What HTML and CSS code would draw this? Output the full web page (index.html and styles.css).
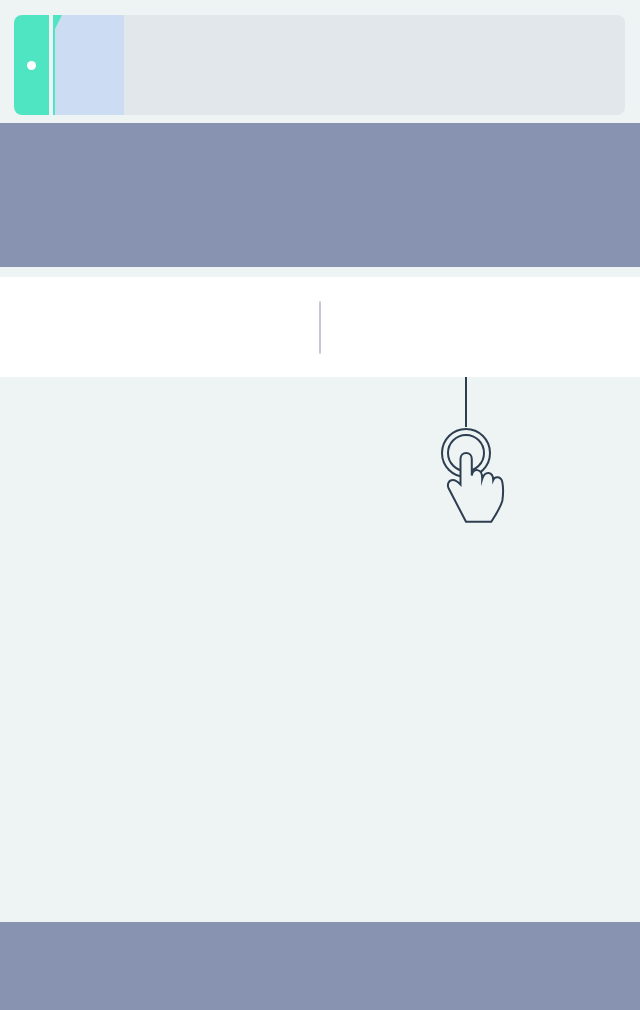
FILE: index.html
```
<!DOCTYPE html>
<html lang="en">
<head>
<meta charset="utf-8">
<meta name="viewport" content="width=device-width, initial-scale=1">
<title>Overview</title>
<link rel="stylesheet" href="styles.css">
</head>
<body>
<header class="top">
  <div class="card">
    <div class="card-handle"><span class="dot"></span></div>
    <div class="card-thumb">
      <svg class="fold" viewBox="0 0 9 14" aria-hidden="true"><path d="M0 0H9L2 14H0Z"/></svg>
    </div>
    <div class="card-body"></div>
  </div>
</header>
<section class="banner"></section>
<section class="split"><span class="divider"></span></section>
<main class="content">
  <svg class="tap" viewBox="0 0 68 148" aria-hidden="true">
    <path d="M26 0V50"/>
    <circle cx="26" cy="76" r="24"/>
    <circle cx="26" cy="76" r="18"/>
    <path class="hand" d="M20.500 107.500V82C20.500 74 31.800 74 31.800 82V98.500C33 91 42.500 90.500 42.200 102C44.800 93.500 53 94 53.200 103C55 99 61 99 62.300 105C63.500 111 63.200 118 62.300 124C60.500 130 57 136 51.300 144.800H26L8.500 111C7 107.500 8.500 103 13 103C16 103 18.500 105.500 20.500 107.500Z"/>
  </svg>
</main>
<footer class="footer"></footer>
</body>
</html>
```
FILE: styles.css
```
* {
  box-sizing: border-box;
}

body {
  margin: 0;
  min-height: 100vh;
  display: flex;
  flex-direction: column;
  background: #eef3f4;
  font-family: "Open Sans", sans-serif;
}

.top {
  padding: 15px 15px 8px 14px;
}

.card {
  display: flex;
  min-height: 100px;
  border-radius: 8px;
  overflow: hidden;
}

.card-handle {
  display: flex;
  align-items: center;
  justify-content: center;
  width: 35px;
  margin-right: 4px;
  background: #50e5c2;
}

.dot {
  width: 9px;
  height: 9px;
  border-radius: 50%;
  background: #fff;
}

.card-thumb {
  display: flex;
  align-items: flex-start;
  width: 71px;
  background: linear-gradient(to right, #50e5c2 2px, #ccdcf2 2px);
}

.fold {
  width: 9px;
  height: 14px;
  fill: #50e5c2;
}

.card-body {
  flex: 1;
  background: #e1e7eb;
}

.banner {
  min-height: 144px;
  background: #8893b1;
}

.split {
  display: flex;
  justify-content: center;
  margin-top: 10px;
  padding: 24px 0 23px;
  background: #fff;
}

.divider {
  width: 2px;
  height: 53px;
  border: solid #dadeea;
  border-width: 1px 0;
  background: #c3c9da;
}

.content {
  flex: 1;
  padding-left: 440px;
}

.tap {
  display: block;
  width: 68px;
  height: 148px;
  fill: none;
  stroke: #2c3e50;
  stroke-width: 2;
  stroke-miterlimit: 10;
}

.hand {
  fill: #eef3f4;
}

.footer {
  min-height: 88px;
  background: #8893b1;
}
```
